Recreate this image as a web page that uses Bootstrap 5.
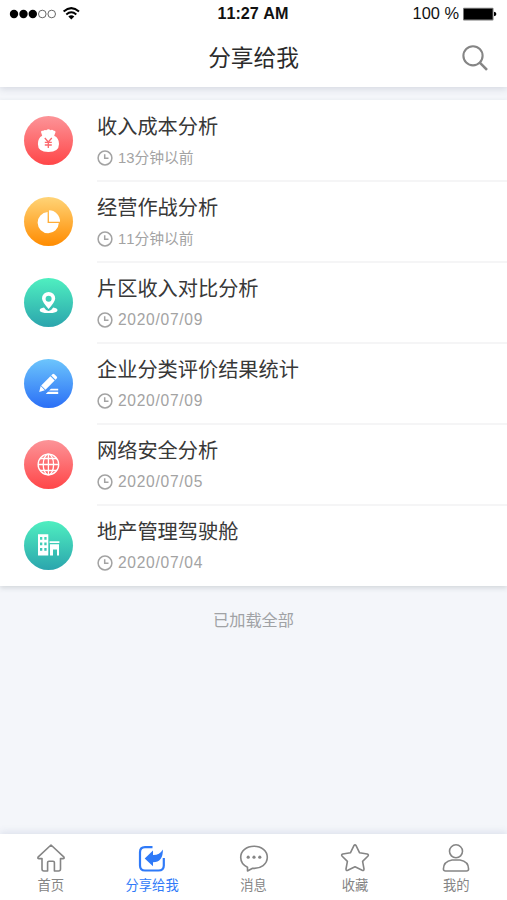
<!DOCTYPE html>
<html lang="zh-CN">
<head>
<meta charset="utf-8">
<meta name="viewport" content="width=device-width, initial-scale=1">
<title>分享给我</title>
<link href="https://cdn.jsdelivr.net/npm/bootstrap@5.3.0/dist/css/bootstrap.min.css" rel="stylesheet">
<style>
body{background:#f4f6fa;font-family:"Liberation Sans","Noto Sans CJK SC",sans-serif;color:#333;height:900px;overflow:hidden}
svg{display:block;flex:none}
.app-head{height:87px;box-shadow:0 2px 7px rgba(70,85,110,.18);z-index:1}
.status{height:27px;color:#111;padding:0 10px 0 9px}
.status>div{flex:1 1 0}
.clock{font-size:16.2px;line-height:27px;font-weight:700;font-kerning:none}
.battery-text{font-size:16.4px;line-height:27px}
.title-bar{height:60px;padding:0 18px}
.page-title{font:400 22.7px/60px "Noto Sans CJK SC",sans-serif;color:#2b2b2b}
.reports{margin-top:13px;height:486px;box-shadow:0 2px 5px rgba(60,70,80,.18)}
.report{height:81px;padding-left:24px}
.report .badge-dot{width:49px;height:49px;margin-right:24px;margin-top:.6px}
.report-body{height:82px;padding-top:11px;border-bottom:2px solid #f5f5f6}
.report:last-child .report-body{border-color:transparent}
.report-name{font:400 20.2px/30px "Noto Sans CJK SC",sans-serif;color:#383838}
.report-time{font-size:14.8px;line-height:20px;color:#a3a3a3;margin-top:7px;gap:5px;font-kerning:none}
.report-time .date{font-size:15.6px;letter-spacing:.7px}
.red{background:linear-gradient(#fc9498,#ff4648)}
.amber{background:linear-gradient(#ffd477,#ff8b00)}
.teal{background:linear-gradient(#4fefc0,#2ba5ad)}
.blue{background:linear-gradient(#6cc5fc,#2b6ff6)}
.all-loaded{font-size:16.2px;line-height:24px;color:#a0a2a5;margin-top:22px}
.tabs{height:66px;box-shadow:0 -2px 7px rgba(100,120,170,.16)}
.tab{flex:1 1 0;color:#858585;font:400 13.3px/18px "Noto Sans CJK SC",sans-serif;padding-top:9px;gap:3px;text-decoration:none}
.tab.current{color:#2f7af8}
</style>
<script src="https://cdn.jsdelivr.net/npm/bootstrap@5.3.0/dist/js/bootstrap.bundle.min.js"></script>
</head>
<body class="d-flex flex-column">
<header class="app-head bg-white position-relative">
  <div class="status d-flex align-items-center">
    <div class="d-flex align-items-center">
      <svg width="72" height="16" viewBox="0 0 72 16"><g fill="#000"><circle cx="5" cy="8" r="4.2"/><circle cx="14.5" cy="8" r="4.2"/><circle cx="23.8" cy="8" r="4.2"/></g><g fill="none" stroke="#555" stroke-width=".9"><circle cx="33.3" cy="8" r="3.8"/><circle cx="42.7" cy="8" r="3.8"/></g><g fill="none" stroke="#000" stroke-width="2"><path d="M54.6 5.4Q62.3-1.1 70 5.4"/><path d="M57.3 8.4Q62.3 4.2 67.3 8.4"/></g><path d="M59.3 10.4Q62.3 8.2 65.3 10.4L62.3 13.5Z"/></svg>
    </div>
    <span class="clock">11:27 AM</span>
    <div class="d-flex align-items-center justify-content-end">
      <span class="battery-text me-1">100 %</span>
      <svg width="34" height="14" viewBox="0 0 34 14"><rect x="0" y=".8" width="30.5" height="12.6" rx="1" fill="#777"/><rect x="1" y="1.8" width="28.5" height="10.6" fill="#000"/><path d="M31 4.8Q33.4 5.2 33.4 7T31 9.2Z"/></svg>
    </div>
  </div>
  <div class="title-bar d-flex align-items-center">
    <span class="flex-fill"></span>
    <h1 class="page-title m-0 ps-4 ms-1">分享给我</h1>
    <div class="flex-fill d-flex justify-content-end pt-1">
      <svg width="28" height="28" viewBox="0 0 28 28" fill="none" stroke="#858585" stroke-width="2.1"><circle cx="12" cy="10.8" r="9.6"/><path d="M18.8 17.6L26 24.8" stroke-width="2.6"/></svg>
    </div>
  </div>
</header>

<svg width="0" height="0" class="position-absolute"><symbol id="clock" viewBox="0 0 16 16"><g fill="none" stroke="#a3a3a3" stroke-width="1.5"><circle cx="8" cy="8" r="6.9"/><path d="M7.7 4.3V8.2H11.5"/></g></symbol></svg>

<main class="flex-fill">
  <div class="reports bg-white">
    <div class="report d-flex">
      <div class="badge-dot red rounded-circle align-self-center"><svg width="49" height="49" viewBox="0 0 49 49"><path fill="#fff" d="M18.2 19.8L17 16Q17.2 14.2 19.3 14.8Q20.5 13.4 22.2 14.3Q24.5 12.5 26.5 14.2Q28.3 13.2 29.8 14.8Q31.8 14.5 31.5 16.3L30.2 19.8Q35 22 35 28Q35 36 24.4 36T13.9 28Q13.9 22 18.2 19.8Z"/><path d="M20.8 22L24.3 26L27.8 22M20.8 26.3H27.8M20.8 29H27.8M24.3 26V32" fill="none" stroke="#fb686d" stroke-width="1.3"/></svg></div>
      <div class="report-body flex-fill"><div class="report-name">收入成本分析</div><div class="report-time d-flex align-items-center"><svg width="16" height="16"><use href="#clock"/></svg><span>13分钟以前</span></div></div>
    </div>
    <div class="report d-flex">
      <div class="badge-dot amber rounded-circle align-self-center"><svg width="49" height="49" viewBox="0 0 49 49" fill="#fff"><path d="M23.6 15A10.6 10.6 0 1 0 34.8 26H23.6Z"/><path d="M25 13.3A11 11 0 0 1 36 24.7H25Z"/></svg></div>
      <div class="report-body flex-fill"><div class="report-name">经营作战分析</div><div class="report-time d-flex align-items-center"><svg width="16" height="16"><use href="#clock"/></svg><span>11分钟以前</span></div></div>
    </div>
    <div class="report d-flex">
      <div class="badge-dot teal rounded-circle align-self-center"><svg width="49" height="49" viewBox="0 0 49 49" fill="#fff"><path fill-rule="evenodd" d="M24.6 31Q18 23.5 18 20.5A6.6 6.6 0 0 1 31.2 20.5Q31.2 23.5 24.6 31ZM24.6 17.7A3 3 0 1 0 24.6 23.7A3 3 0 0 0 24.6 17.7Z"/><path d="M20 29.4Q15.7 30 15.7 32.2Q15.7 35 24.6 35T33.5 32.2Q33.5 30 29.2 29.4Q27 33 24.6 33T20 29.4Z"/></svg></div>
      <div class="report-body flex-fill"><div class="report-name">片区收入对比分析</div><div class="report-time d-flex align-items-center"><svg width="16" height="16"><use href="#clock"/></svg><span class="date">2020/07/09</span></div></div>
    </div>
    <div class="report d-flex">
      <div class="badge-dot blue rounded-circle align-self-center"><svg width="49" height="49" viewBox="0 0 49 49" fill="#fff"><path d="M15.2 33L16.7 27L20.9 31.3Z"/><path d="M17.2 26.4L26.4 17.2L30.7 21.5L21.5 30.7Z"/><path d="M27.2 16.4L28.4 15.2Q29.4 14.2 30.4 15.2L32.7 17.5Q33.7 18.5 32.7 19.5L31.5 20.7Z"/><path d="M27 29.7H34.2V31.6H25ZM24 32.8H34.2V35H21.8Z"/></svg></div>
      <div class="report-body flex-fill"><div class="report-name">企业分类评价结果统计</div><div class="report-time d-flex align-items-center"><svg width="16" height="16"><use href="#clock"/></svg><span class="date">2020/07/09</span></div></div>
    </div>
    <div class="report d-flex">
      <div class="badge-dot red rounded-circle align-self-center"><svg width="49" height="49" viewBox="0 0 49 49" fill="none" stroke="#fff" stroke-width="1.3"><circle cx="24.4" cy="24.5" r="10.3"/><ellipse cx="24.4" cy="24.5" rx="5.2" ry="10.3"/><path d="M24.4 14.2V34.8M14 24.5H34.8M16 18.5H32.8M16 30.5H32.8"/></svg></div>
      <div class="report-body flex-fill"><div class="report-name">网络安全分析</div><div class="report-time d-flex align-items-center"><svg width="16" height="16"><use href="#clock"/></svg><span class="date">2020/07/05</span></div></div>
    </div>
    <div class="report d-flex">
      <div class="badge-dot teal rounded-circle align-self-center"><svg width="49" height="49" viewBox="0 0 49 49" fill="#fff"><path fill-rule="evenodd" d="M14 13.3H24.3V34.4H14ZM16 16V18.7H18.3V16ZM20.3 16V18.7H22.6V16ZM16 21.5V24.2H18.3V21.5ZM20.3 21.5V24.2H22.6V21.5ZM16 27V29.7H18.3V27ZM20.3 27V29.7H22.6V27Z"/><path d="M25.6 20.2H35.4V22H25.6ZM26 23.2H35V34.4H33V28.4H29V34.4H26Z"/></svg></div>
      <div class="report-body flex-fill"><div class="report-name">地产管理驾驶舱</div><div class="report-time d-flex align-items-center"><svg width="16" height="16"><use href="#clock"/></svg><span class="date">2020/07/04</span></div></div>
    </div>
  </div>
  <div class="all-loaded text-center">已加载全部</div>
</main>

<nav class="tabs bg-white d-flex">
  <a class="tab d-flex flex-column align-items-center"><svg width="30" height="30" viewBox="0 0 30 30" fill="none" stroke="#858585" stroke-width="1.6" stroke-linejoin="round"><path d="M15 2L2 14.2Q1.4 15.6 3 15.6H6V26Q6 28 8 28H11.6V19.6Q11.6 18.2 13 18.2H17Q18.4 18.2 18.4 19.6V28H22.5Q24.5 28 24.5 26V15.6H27Q28.6 15.6 28 14.2Z"/></svg><span>首页</span></a>
  <a class="tab current d-flex flex-column align-items-center"><svg width="30" height="30" viewBox="0 0 30 30"><path d="M15.5 4.2H8Q3 4.2 3 9.2V22.5Q3 27.5 8 27.5H21.5Q26.8 27.5 26.8 22.5V15" fill="none" stroke="#2f7af8" stroke-width="2.2"/><path fill="#2f7af8" d="M7.7 15.4L16 7.6V12Q22.5 12.2 25.9 6.4Q26.2 18.9 16 19.3V23.2Z"/></svg><span>分享给我</span></a>
  <a class="tab d-flex flex-column align-items-center"><svg width="30" height="30" viewBox="0 0 30 30"><path d="M8.5 24.2V28L13.6 25.3C22 26 28.3 21 28.3 14.3C28.3 7.7 22.5 3.2 15 3.2S1.7 7.7 1.7 14.3C1.7 18.5 4.3 22.3 8.5 24.2Z" fill="none" stroke="#858585" stroke-width="1.6" stroke-linejoin="round"/><g fill="#858585"><circle cx="9.2" cy="14.2" r="1.6"/><circle cx="15" cy="14.2" r="1.6"/><circle cx="20.8" cy="14.2" r="1.6"/></g></svg><span>消息</span></a>
  <a class="tab d-flex flex-column align-items-center"><svg width="30" height="30" viewBox="0 0 30 30" fill="none" stroke="#858585" stroke-width="1.6" stroke-linejoin="round"><path d="M13.8 2.8Q15 1 16.2 2.8L19.6 9.8L27.2 11Q29.2 11.6 27.8 13.2L22.6 18.4L24 26Q24 28 22.2 27.3L15 23.8L7.8 27.3Q6 28 6 26L7.4 18.4L2.2 13.2Q.8 11.6 2.8 11L10.4 9.8Z"/></svg><span>收藏</span></a>
  <a class="tab d-flex flex-column align-items-center"><svg width="30" height="30" viewBox="0 0 30 30" fill="none" stroke="#858585" stroke-width="1.6"><circle cx="15" cy="8.3" r="6.5"/><path d="M11 17H19Q27.5 18.5 27.6 26Q27.5 28 25.5 28H4.5Q2.5 28 2.4 26Q2.5 18.5 11 17Z"/></svg><span>我的</span></a>
</nav>
</body>
</html>
